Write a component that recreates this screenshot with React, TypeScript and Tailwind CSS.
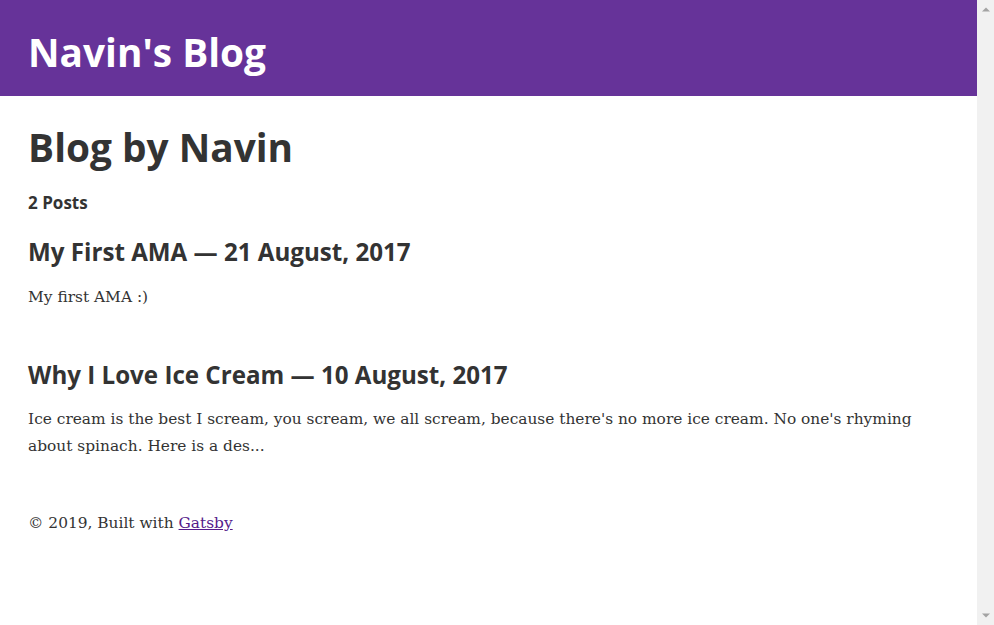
const posts = [
  {
    title: 'My First AMA',
    date: '21 August, 2017',
    excerpt: 'My first AMA :)',
  },
  {
    title: 'Why I Love Ice Cream',
    date: '10 August, 2017',
    excerpt:
      "Ice cream is the best I scream, you scream, we all scream, because there's no more ice cream. No one's rhyming about spinach. Here is a des...",
  },
];

const heading = "font-['Open_Sans','Noto_Sans',sans-serif] font-bold";

function Scrollbar() {
  return (
    <div className="w-[17px] shrink-0 bg-[#f1f1f1] flex flex-col justify-between items-center py-[7px]">
      <svg width="8" height="5" viewBox="0 0 8 5">
        <path d="M0 4.5 L4 0.5 L8 4.5 Z" fill="#a3a3a3" />
      </svg>
      <svg width="8" height="5" viewBox="0 0 8 5">
        <path d="M0 0.5 L4 4.5 L8 0.5 Z" fill="#a3a3a3" />
      </svg>
    </div>
  );
}

export default function App() {
  return (
    <div className="h-screen flex bg-white text-[#333] font-['DejaVu_Serif',serif] text-[15.4px] leading-[27px]">
      <div className="flex-1 min-w-0">
        <header className="bg-[#663399] mb-[29px]">
          <div className="max-w-[960px] mx-auto px-[19.575px] pt-[30px] pb-[21.5px]">
            <h1 className={`${heading} text-[38.8px] leading-[44.55px] text-white`}>Navin's Blog</h1>
          </div>
        </header>

        <div className="max-w-[960px] mx-auto px-[19.575px] pb-[26.1px]">
          <main>
            <h1 className={`${heading} text-[38.8px] leading-[44.55px] mb-[23.1px]`}>Blog by Navin</h1>
            <h4 className={`${heading} text-[17px] leading-[19.8px] mb-[26px]`}>2 Posts</h4>
            {posts.map((post) => (
              <div key={post.title} className="mb-[50px]">
                <h3 className={`${heading} text-[24.15px] leading-[27.4px] mb-[18px]`}>
                  {post.title} — {post.date}
                </h3>
                <p>{post.excerpt}</p>
              </div>
            ))}
          </main>
          <footer>
            © 2019, Built with{' '}
            <a href="https://www.gatsbyjs.org" className="text-[#551a8b] underline">
              Gatsby
            </a>
          </footer>
        </div>
      </div>
      <Scrollbar />
    </div>
  );
}
